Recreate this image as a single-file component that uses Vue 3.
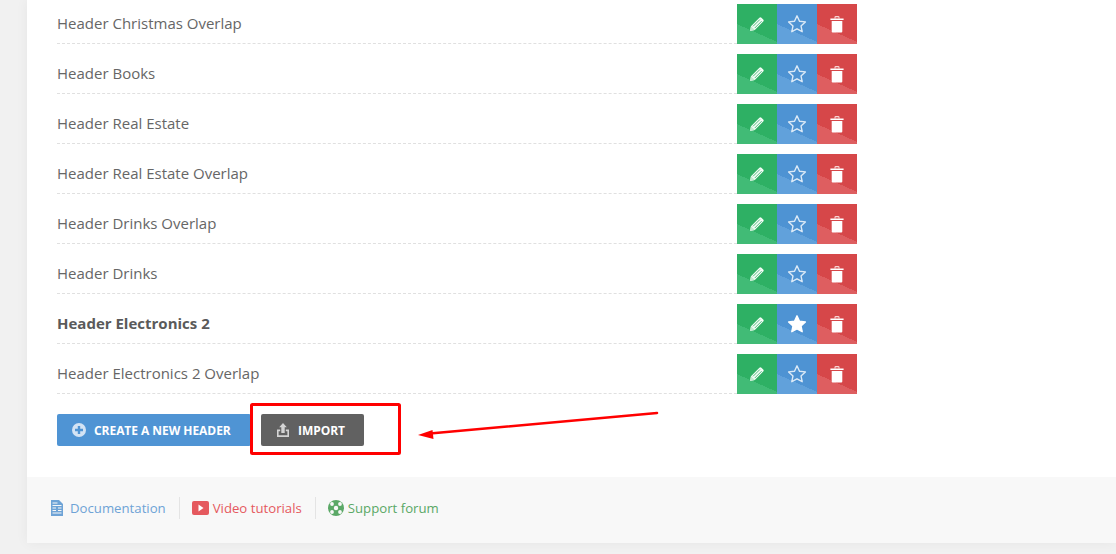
<script setup>
const rows = [
  { name: 'Header Christmas Overlap' },
  { name: 'Header Books' },
  { name: 'Header Real Estate' },
  { name: 'Header Real Estate Overlap' },
  { name: 'Header Drinks Overlap' },
  { name: 'Header Drinks' },
  { name: 'Header Electronics 2', active: true },
  { name: 'Header Electronics 2 Overlap' }
]
</script>

<template>
  <div class="page">
    <main class="card">
      <section class="list">
        <div v-for="row in rows" :key="row.name" class="row">
          <div class="name" :class="{ active: row.active }">{{ row.name }}</div>
          <div class="actions">
            <button class="act green" type="button" aria-label="Edit">
              <svg width="16" height="16" viewBox="0 0 16 16">
                <path fill="#f4fcf7" d="M1 15 2 10.2 10.4 1.8a1.4 1.4 0 0 1 2 0l1.8 1.8a1.4 1.4 0 0 1 0 2L5.8 14Z" />
                <path fill="none" stroke="#3cb56f" stroke-width=".9" d="M4 10.4 10.9 3.5M5.7 12.1 12.6 5.2" />
                <path fill="#bfeacf" d="M1 15 2 10.2 5.8 14Z" />
              </svg>
            </button>
            <button class="act blue" type="button" aria-label="Favourite">
              <svg width="20" height="20" viewBox="0 0 20 20">
                <path :fill="row.active ? '#fff' : 'none'" stroke="#fff" stroke-width="1.4" stroke-linejoin="round" :opacity="row.active ? 1 : .8" d="M10 1.8 12.5 7.2 18.4 7.9 14 11.9 15.2 17.7 10 14.8 4.8 17.7 6 11.9 1.6 7.9 7.5 7.2Z" />
              </svg>
            </button>
            <button class="act red" type="button" aria-label="Delete">
              <svg width="14" height="17" viewBox="0 0 14 17">
                <path fill="none" stroke="#f6d5d5" stroke-width="1.1" d="M5 2.4V1.4a.8.8 0 0 1 .8-.8h2.4a.8.8 0 0 1 .8.8v1" />
                <path fill="#fff" d="M.4 2.6h13.2v1.3H.4ZM1.7 5h10.6v10.6a1 1 0 0 1-1 1H2.7a1 1 0 0 1-1-1Z" />
              </svg>
            </button>
          </div>
        </div>
      </section>

      <div class="toolbar">
        <button class="btn btn-blue" type="button">
          <svg width="14" height="14" viewBox="0 0 14 14">
            <circle cx="7" cy="7" r="7" fill="#d3e3f4" />
            <path fill="#4f94d4" d="M5.8 3h2.4v2.8H11v2.4H8.2V11H5.8V8.2H3V5.8h2.8Z" />
          </svg>
          Create a new header
        </button>
        <button class="btn btn-gray" type="button">
          <svg width="12" height="14" viewBox="0 0 12 14">
            <path fill="#d4d4d4" d="M6 0 9.8 4.2H7.7V10H4.3V4.2H2.2ZM0 6.6h3.2v1.7H1.6v4h8.8v-4H8.8V6.6H12V14H0Z" />
          </svg>
          Import
        </button>
      </div>

      <footer class="footer">
        <a class="link doc">
          <svg width="12" height="16" viewBox="0 0 12 16">
            <path fill="#6ea3d6" d="M0 0h8l4 4v12H0Z" />
            <path fill="none" stroke="#f8f8f8" d="M1.5 3h5M1.5 5.5h9M1.5 8h3.5M7 8h3.5M1.5 10.5h3.5M7 10.5h3.5M1.5 13h9" />
          </svg>
          Documentation
        </a>
        <a class="link video">
          <svg width="17" height="14" viewBox="0 0 17 14">
            <rect width="17" height="14" rx="2" fill="#e5595e" />
            <path fill="#fff" d="M6.5 3.5 11.5 7 6.5 10.5Z" />
          </svg>
          Video tutorials
        </a>
        <a class="link forum">
          <svg width="16" height="16" viewBox="0 0 16 16">
            <circle cx="8" cy="8" r="8" fill="#5aa866" />
            <circle cx="8" cy="8" r="2.2" fill="#f8f8f8" />
            <g fill="#f8f8f8">
              <circle cx="4" cy="4" r="1.9" />
              <circle cx="12" cy="4" r="1.9" />
              <circle cx="4" cy="12" r="1.9" />
              <circle cx="12" cy="12" r="1.9" />
            </g>
          </svg>
          Support forum
        </a>
      </footer>
    </main>

    <svg class="annotation" width="1116" height="554" viewBox="0 0 1116 554" aria-hidden="true">
      <rect x="251.5" y="404.5" width="148" height="49" rx="1" fill="none" stroke="#f00" stroke-width="3" />
      <path stroke="#f00" stroke-width="2.6" stroke-linecap="round" d="M657 413 430 433.5" />
      <path fill="#f00" d="M418 435 432.5 430 433.5 439Z" />
    </svg>
  </div>
</template>

<style>
html, body {
  margin: 0;
  background: #f1f1f1;
  overflow: hidden;
}
</style>

<style scoped>
.page {
  position: relative;
  height: 554px;
  overflow: hidden;
  font-family: "Open Sans", "Liberation Sans", sans-serif;
}
.card {
  margin-left: 27px;
  height: 543px;
  display: flex;
  flex-direction: column;
  background: #fff;
  box-shadow: 0 0 12px rgba(0, 0, 0, .05);
}
.list {
  padding: 4px 0 0 30px;
}
.row {
  display: flex;
  width: 800px;
  height: 40px;
  margin-bottom: 10px;
}
.name {
  flex: 1;
  box-sizing: border-box;
  border-bottom: 1px dashed #e0e0e0;
  font-size: 15px;
  line-height: 39px;
  color: #666;
}
.name.active {
  font-weight: 700;
  color: #5a5a5a;
}
.actions {
  display: flex;
}
.act {
  width: 40px;
  height: 40px;
  display: flex;
  align-items: center;
  justify-content: center;
  padding: 0;
  border: 0;
}
.green { background: linear-gradient(204deg, #2eb064 65.5%, #41bb76 65.5%); }
.blue { background: linear-gradient(204deg, #4e93d3 65.5%, #61a1db 65.5%); }
.red { background: linear-gradient(204deg, #d64749 65.5%, #de5e60 65.5%); }
.toolbar {
  display: flex;
  gap: 10px;
  padding: 10px 0 0 30px;
}
.btn {
  height: 32px;
  display: flex;
  align-items: center;
  padding: 0 19px 0 15px;
  gap: 8px;
  border: 0;
  border-radius: 2px;
  color: #fff;
  font: 700 12px "Open Sans", "Liberation Sans", sans-serif;
  letter-spacing: -.05px;
  text-transform: uppercase;
}
.btn-blue {
  width: 194px;
  background: #4f94d4;
}
.btn-gray {
  width: 103px;
  padding-left: 16px;
  gap: 9px;
  background: #616161;
}
.footer {
  flex: 1;
  display: flex;
  align-items: center;
  margin-top: 31px;
  padding: 0 0 4px 24px;
  background: #f8f8f8;
}
.link {
  display: flex;
  align-items: center;
  gap: 7px;
  height: 22px;
  font-size: 13.2px;
  line-height: 22px;
}
.link + .link {
  margin-left: 13px;
  padding-left: 12px;
  border-left: 1px solid #e4e4e4;
  gap: 4px;
}
.doc { color: #6ea3d6; }
.video { color: #e5595e; }
.forum { color: #5aa866; }
.annotation {
  position: absolute;
  left: 0;
  top: 0;
  pointer-events: none;
}
</style>
